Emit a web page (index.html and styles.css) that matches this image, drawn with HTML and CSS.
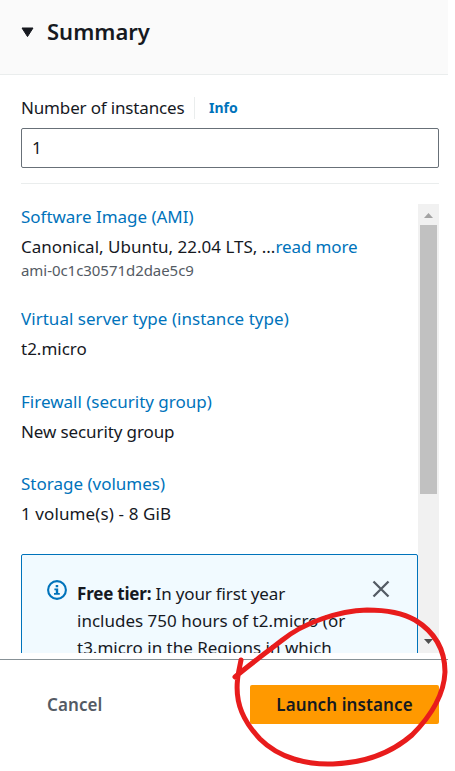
FILE: index.html
```html
<!DOCTYPE html>
<html lang="en">
<head>
<meta charset="utf-8">
<title>Summary</title>
<link rel="stylesheet" href="styles.css">
</head>
<body>
<aside class="panel">
  <header class="panel-header">
    <svg class="caret" width="13" height="11" viewBox="0 0 13 11"><path d="M1 1H12L6.5 9.6Z" fill="#16191f" stroke="#16191f" stroke-width="1" stroke-linejoin="round"/></svg>
    <h2 class="title">Summary</h2>
  </header>
  <section class="instances">
    <div class="label-row">
      <label class="label" for="count">Number of instances</label>
      <a class="info">Info</a>
    </div>
    <input class="input" id="count" type="text" value="1">
  </section>
  <section class="scroll-area">
    <div class="content">
      <div class="item item-ami">
        <a class="link tight">Software Image (AMI)</a>
        <p class="value">Canonical, Ubuntu, 22.04 LTS, ...<a class="more tighter">read more</a></p>
        <p class="sub">ami-0c1c30571d2dae5c9</p>
      </div>
      <div class="item item-type">
        <a class="link loose">Virtual server type (instance type)</a>
        <p class="value">t2.micro</p>
      </div>
      <div class="item item-firewall">
        <a class="link">Firewall (security group)</a>
        <p class="value tighter">New security group</p>
      </div>
      <div class="item item-storage">
        <a class="link">Storage (volumes)</a>
        <p class="value looser">1 volume(s) - 8 GiB</p>
      </div>
      <div class="alert">
        <svg class="alert-icon" width="20" height="20" viewBox="0 0 20 20"><circle cx="10" cy="10" r="8.9" fill="none" stroke="#0073bb" stroke-width="2.1"/><path d="M8.7 5H11.2V7.2H8.7ZM7.4 8.5H11.2V13H12.8V14.8H7V13H8.8V10.2H7.4Z" fill="#0073bb"/></svg>
        <p class="alert-text"><span class="line first"><b>Free tier:</b> In your first year</span><span class="line">includes 750 hours of t2.micro (or</span><span class="line">t3.micro in the Regions in which</span></p>
        <svg class="close" width="18" height="18" viewBox="0 0 18 18"><path d="M1.5 1.5L16.5 16.5M16.5 1.5L1.5 16.5" stroke="#545b64" stroke-width="2.3"/></svg>
      </div>
    </div>
    <div class="scrollbar">
      <svg class="arrow" width="21" height="21" viewBox="0 0 21 21"><path d="M6 14L10.5 9L15 14Z" fill="#a3a3a3"/></svg>
      <div class="thumb"></div>
      <svg class="arrow arrow-down" width="21" height="21" viewBox="0 0 21 21"><path d="M6 7L10.5 12L15 7Z" fill="#505050"/></svg>
    </div>
  </section>
  <footer class="footer">
    <button class="btn cancel">Cancel</button>
    <button class="btn launch">Launch instance</button>
  </footer>
</aside>
<svg class="marker" width="455" height="771" viewBox="0 0 455 771"><path d="M241 660C240 666 238 673 237.500 680C235 704 244 722 260 739C279 758 307 765 333 764C363 763 390 754 412 735C432 715 444 694 445 672C445 652 438 634 415 620C401 612 386 610 367 610C339 611 304 622 281 641C267 652 248 666 235 677" fill="none" stroke="#e81c1c" stroke-width="5" stroke-linecap="round" stroke-linejoin="round"/></svg>
</body>
</html>
```
FILE: styles.css
```css
* { box-sizing: border-box; }
body {
  margin: 0;
  background: #fff;
  color: #16191f;
  font-family: "Noto Sans", "Open Sans", sans-serif;
  font-size: 17px;
  line-height: 30px;
  height: 771px;
  overflow: hidden;
  position: relative;
}
p, h2 { margin: 0; }
.panel { width: 448px; height: 771px; display: flex; flex-direction: column; }
.panel-header {
  height: 75px;
  flex: none;
  display: flex;
  align-items: flex-start;
  background: #fafafa;
  border-bottom: 1px solid #eaeded;
  padding: 16px 20px 0;
}
.caret { margin: 11px 13px 0 1px; flex: none; }
.title { font-size: 22px; font-weight: 600; line-height: 30px; white-space: nowrap; }
.instances { margin: 0 9px 0 21px; height: 109px; flex: none; border-bottom: 1px solid #eaeded; padding-top: 22px; }
.label-row { display: flex; align-items: center; height: 22px; margin-bottom: 9px; white-space: nowrap; }
.label { width: 174px; height: 22px; line-height: 22px; border-right: 1px solid #eaeded; letter-spacing: -0.16px; }
.info { font-size: 14px; font-weight: 700; color: #0073bb; margin-left: 14px; line-height: 24px; }
.input {
  display: block;
  width: 418px;
  height: 40px;
  border: 1px solid #687078;
  border-radius: 2px;
  padding: 0 10px 2px;
  font: inherit;
  color: inherit;
  background: #fff;
}
.scroll-area { display: flex; margin: 20px 9px 0 21px; height: 449px; flex: none; overflow: hidden; }
.content { width: 397px; flex: none; margin-top: -2px; white-space: nowrap; }
.item-ami { height: 102px; }
.item-type { height: 83px; }
.item-firewall { height: 82px; }
.item-storage { height: 85px; }
.link { display: block; color: #0073bb; }
.more { color: #0073bb; }
.sub { font-size: 15px; line-height: 20px; color: #545b64; margin-top: -2px; letter-spacing: -0.05px; }
.tight { letter-spacing: -0.03px; }
.tighter { letter-spacing: -0.11px; }
.loose { letter-spacing: 0.03px; }
.looser { letter-spacing: 0.11px; }
.alert {
  display: flex;
  align-items: flex-start;
  height: 130px;
  border: 1px solid #0073bb;
  border-radius: 2px;
  background: #f1faff;
  padding: 25px 27px 0 25px;
}
.alert-icon { flex: none; margin-right: 10px; }
.alert-text { flex: 1; line-height: 27px; }
.alert-text b { letter-spacing: -0.2px; }
.line { display: block; }
.first { letter-spacing: -0.16px; }
.close { flex: none; }
.scrollbar { width: 21px; background: #f1f1f1; display: flex; flex-direction: column; }
.arrow { flex: none; }
.thumb { height: 269px; margin: 0 2px; background: #c1c1c1; }
.arrow-down { margin-top: auto; }
.footer {
  margin-top: 6px;
  border-top: 1px solid #879196;
  display: flex;
  justify-content: space-between;
  align-items: flex-start;
  flex: 1;
  padding: 25px 9px 0 21px;
}
.btn { font: inherit; font-weight: 600; height: 39px; border: 0; border-radius: 2px; background: none; padding: 0 26px; white-space: nowrap; }
.cancel { color: #545b64; letter-spacing: 0.1px; }
.launch { background: #ff9900; color: #16191f; width: 189px; letter-spacing: 0.1px; }
.marker { position: absolute; left: 0; top: 0; pointer-events: none; }
```
